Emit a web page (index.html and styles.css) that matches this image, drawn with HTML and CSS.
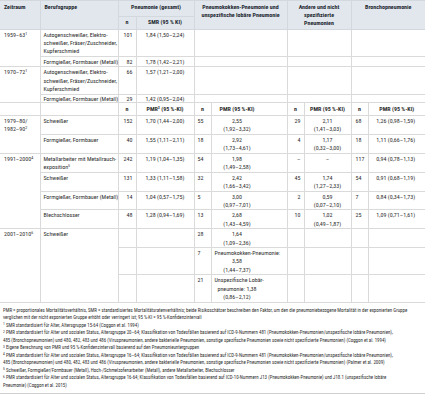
FILE: index.html
```html
<!DOCTYPE html>
<html lang="de">
<head>
<meta charset="utf-8">
<link rel="stylesheet" href="styles.css">
</head>
<body>
<div class="wrap">
<table class="t">
<colgroup>
<col class="w-zeit"><col class="w-beruf"><col class="w-n1"><col class="w-smr"><col class="w-n2"><col class="w-pk"><col class="w-n3"><col class="w-and"><col class="w-n4"><col class="w-br">
</colgroup>
<thead>
<tr class="h1">
<th rowspan="2" class="f l">Zeitraum</th>
<th rowspan="2" class="l">Berufsgruppe</th>
<th colspan="2" class="ges">Pneumonie (gesamt)</th>
<th colspan="2" rowspan="2">Pneumokokken-Pneumonie und<br>unspezifische lobäre Pneumonie</th>
<th colspan="2" rowspan="2">Andere und nicht<br>spezifizierte<br>Pneumonien</th>
<th colspan="2" rowspan="2" class="e">Bronchopneumonie</th>
</tr>
<tr class="h2"><th class="sub">n</th><th class="sub">SMR (95 % KI)</th></tr>
</thead>
<tbody>
<tr>
<td rowspan="2" class="f">1959–63<sup>1</sup></td>
<td>Autogenschweißer, Elektro-<br>schweißer, Fräser/Zuschneider,<br>Kupferschmied</td>
<td class="n">101</td><td class="c">1,84 (1,50–2,24)</td>
<td colspan="2"></td><td colspan="2"></td><td colspan="2" class="e"></td>
</tr>
<tr>
<td>Formgießer, Formbauer (Metall)</td>
<td class="n">82</td><td class="c">1,78 (1,42–2,21)</td>
<td colspan="2"></td><td colspan="2"></td><td colspan="2" class="e"></td>
</tr>
<tr>
<td rowspan="2" class="f">1970–72<sup>1</sup></td>
<td>Autogenschweißer, Elektro-<br>schweißer, Fräser/Zuschneider,<br>Kupferschmied</td>
<td class="n">66</td><td class="c">1,57 (1,21–2,00)</td>
<td colspan="2"></td><td colspan="2"></td><td colspan="2" class="e"></td>
</tr>
<tr class="tight">
<td>Formgießer, Formbauer (Metall)</td>
<td class="n">29</td><td class="c">1,42 (0,95–2,04)</td>
<td colspan="2"></td><td colspan="2"></td><td colspan="2" class="e"></td>
</tr>
<tr class="subh">
<td class="f"></td><td></td>
<td class="hc">n</td><td class="hc">PMR<sup>3</sup> (95 %-KI)</td>
<td class="hc">n</td><td class="hc pk">PMR (95 %-KI)</td>
<td class="hc">n</td><td class="hc">PMR (95 %-KI)</td>
<td class="hc">n</td><td class="hc e">PMR (95 %-KI)</td>
</tr>
<tr>
<td rowspan="2" class="f">1979–80/<br>1982–90<sup>2</sup></td>
<td>Schweißer</td>
<td class="n">152</td><td class="c">1,70 (1,44–2,00)</td>
<td class="nl">55</td><td class="pk">2,55<br>(1,92–3,32)</td>
<td class="n">29</td><td class="c">2,11<br>(1,41–3,03)</td>
<td class="nb">68</td><td class="c br e">1,26 (0,98–1,59)</td>
</tr>
<tr>
<td>Formgießer, Formbauer</td>
<td class="n">40</td><td class="c">1,55 (1,11–2,11)</td>
<td class="nl">18</td><td class="pk">2,92<br>(1,73–4,61)</td>
<td class="n">4</td><td class="c">1,17<br>(0,32–3,00)</td>
<td class="nb">18</td><td class="c br e">1,11 (0,66–1,76)</td>
</tr>
<tr>
<td rowspan="4" class="f">1991–2000<sup>4</sup></td>
<td>Metallarbeiter mit Metallrauch-<br>exposition<sup>5</sup></td>
<td class="n">242</td><td class="c">1,19 (1,04–1,35)</td>
<td class="nl">54</td><td class="pk">1,98<br>(1,49–2,58)</td>
<td class="n">–</td><td class="c">–</td>
<td class="nb">117</td><td class="c br e">0,94 (0,78–1,13)</td>
</tr>
<tr>
<td>Schweißer</td>
<td class="n">131</td><td class="c">1,33 (1,11–1,58)</td>
<td class="nl">32</td><td class="pk">2,42<br>(1,66–3,42)</td>
<td class="n">45</td><td class="c">1,74<br>(1,27–2,33)</td>
<td class="nb">54</td><td class="c br e">0,91 (0,68–1,19)</td>
</tr>
<tr>
<td>Formgießer, Formbauer (Metall)</td>
<td class="n">14</td><td class="c">1,04 (0,57–1,75)</td>
<td class="nl">5</td><td class="pk">3,00<br>(0,97–7,01)</td>
<td class="n">2</td><td class="c">0,59<br>(0,07–2,10)</td>
<td class="nb">7</td><td class="c br e">0,84 (0,34–1,73)</td>
</tr>
<tr>
<td>Blechschlosser</td>
<td class="n">48</td><td class="c">1,28 (0,94–1,69)</td>
<td class="nl">13</td><td class="pk">2,68<br>(1,43–4,59)</td>
<td class="n">10</td><td class="c">1,02<br>(0,49–1,87)</td>
<td class="nb">25</td><td class="c br e">1,09 (0,71–1,61)</td>
</tr>
<tr>
<td rowspan="3" class="f">2001–2010<sup>6</sup></td>
<td rowspan="3">Schweißer</td>
<td></td><td></td>
<td class="nl">28</td><td class="pk">1,64<br>(1,09–2,36)</td>
<td></td><td></td><td></td><td class="e"></td>
</tr>
<tr>
<td></td><td></td>
<td class="nl">7</td><td class="pk">Pneumokokken-Pneumonie:<br>3,58<br>(1,44–7,37)</td>
<td></td><td></td><td></td><td class="e"></td>
</tr>
<tr>
<td></td><td></td>
<td class="nl">21</td><td class="pk">Unspezifische Lobär-<br>pneumonie: 1,38<br>(0,86–2,12)</td>
<td></td><td></td><td></td><td class="e"></td>
</tr>
</tbody>
</table>
<div class="notes">
<span class="ln">PMR = proportionales Mortalitätsverhältnis, SMR = standardisiertes Mortalitätsratenverhältnis; beide Risikoschätzer beschreiben den Faktor, um den die pneumoniebezogene Mortalität in der exponierten Gruppe</span>
<span class="ln">verglichen mit der nicht exponierten Gruppe erhöht oder verringert ist; 95 %-KI = 95 %-Konfidenzintervall</span>
<span class="ln"><sup>1</sup> SMR standardisiert für Alter, Altersgruppe 15-64 (Coggon et al. 1994)</span>
<span class="ln"><sup>2</sup> PMR standardisiert für Alter und sozialen Status, Altersgruppe 20–64; Klassifikation von Todesfällen basierend auf ICD-9-Nummern 481 (Pneumokokken-Pneumonien/unspezifische lobäre Pneumonien),</span>
<span class="ln">485 (Bronchopneumonien) und 480, 482, 483 und 486 (Viruspneumonien, andere bakterielle Pneumonien, sonstige spezifische Pneumonien sowie nicht spezifizierte Pneumonien) (Coggon et al. 1994)</span>
<span class="ln"><sup>3</sup> Eigene Berechnung von PMR und 95 %-Konfidenzintervall basierend auf den Pneumonieuntergruppen</span>
<span class="ln"><sup>4</sup> PMR standardisiert für Alter und sozialen Status, Altersgruppe 16–64; Klassifikation von Todesfällen basierend auf ICD-9-Nummern 481 (Pneumokokken-Pneumonien/unspezifische lobäre Pneumonien),</span>
<span class="ln">485 (Bronchopneumonien) und 480, 482, 483 und 486 (Viruspneumonien, andere bakterielle Pneumonien, sonstige spezifische Pneumonien sowie nicht spezifizierte Pneumonien) (Palmer et al. 2009)</span>
<span class="ln"><sup>5</sup> Schweißer, Formgießer/Formbauer (Metall), Hoch-/Schmelzofenarbeiter (Metall), andere Metallarbeiter, Blechschlosser</span>
<span class="ln"><sup>6</sup> PMR standardisiert für Alter und sozialen Status, Altersgruppe 16-64; Klassifikation von Todesfällen basierend auf ICD-10-Nummern J13 (Pneumokokken-Pneumonie) und J18.1 (unspezifische lobäre</span>
<span class="ln">Pneumonie) (Coggon et al. 2015)</span>
</div>
</div>
</body>
</html>
```

FILE: styles.css
```css
* { box-sizing: border-box; }
html, body { margin: 0; padding: 0; background: #ffffff; }
body {
  width: 425px;
  font-family: "Roboto Condensed", "Liberation Sans", sans-serif;
  color: #2d2d2d;
}
.wrap { width: 425px; }

.t {
  width: 425px;
  border-collapse: collapse;
  table-layout: fixed;
  font-size: 6px;
  line-height: 8.2px;
}
.w-zeit { width: 40px; }
.w-beruf { width: 78px; }
.w-n1 { width: 18px; }
.w-smr { width: 58px; }
.w-n2 { width: 17px; }
.w-pk { width: 76px; }
.w-n3 { width: 17px; }
.w-and { width: 47px; }
.w-n4 { width: 17px; }
.w-br { width: 57px; }

.t th, .t td {
  border: 1px solid #dadada;
  padding: 1px 3px 0.5px;
  vertical-align: top;
  text-align: left;
  font-weight: normal;
  white-space: nowrap;
  overflow: hidden;
}
.t .f { border-left: 0; padding-left: 4px; }
.t .e { border-right: 0; }

.t thead th {
  background: #e2e7ee;
  font-weight: bold;
  text-align: center;
  color: #222831;
  padding: 2px 2px 1px;
  border-color: #d3d8df;
}
.t thead th.l { text-align: left; padding-left: 4px; }
.t thead th.f { padding-left: 4px; }
.t thead th.ges { padding-bottom: 2.5px; }
.t thead th.sub { padding-top: 1px; }

.t sup {
  font-size: 4px;
  line-height: 0;
  vertical-align: baseline;
  position: relative;
  top: -2px;
}

.t td.n { text-align: right; }
.t td.nl { text-align: left; }
.t td.nb { text-align: left; padding-left: 4px; }
.t td.c { text-align: center; }
.t td.br { padding-left: 2px; padding-right: 4px; }
.t td.pk { text-align: center; padding-left: 3px; padding-right: 27px; }

.t tr.tight td { padding-top: 0; padding-bottom: 0; line-height: 7.2px; }

.t tr.subh td { font-weight: bold; padding-top: 2px; padding-bottom: 2px; }
.t td.hc { text-align: center; }
.t td.hc.pk { padding-left: 3px; padding-right: 27px; }

.notes {
  border-bottom: 1px solid #cfcfcf;
  padding: 4px 3px 4px;
  font-size: 4.9px;
  line-height: 7.5px;
  color: #2d2d2d;
}
.notes .ln { display: block; white-space: nowrap; }
.notes sup {
  font-size: 3.6px;
  line-height: 0;
  vertical-align: baseline;
  position: relative;
  top: -1.5px;
}
```
